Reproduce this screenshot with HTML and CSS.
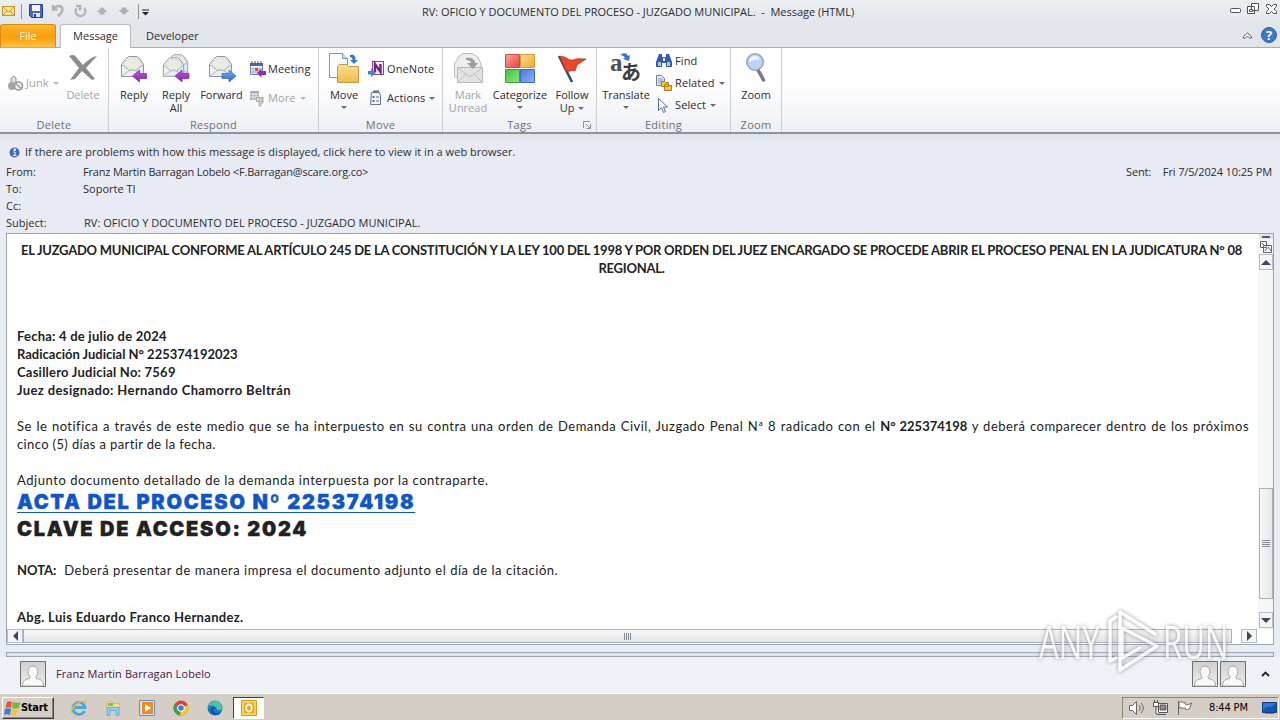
FILE: index.html
```
<!DOCTYPE html>
<html lang="en">
<head>
<meta charset="utf-8">
<title>RV: OFICIO Y DOCUMENTO DEL PROCESO - JUZGADO MUNICIPAL. - Message (HTML)</title>
<link rel="stylesheet" href="styles.css">
</head>
<body>
<svg width="0" height="0" class="defs" aria-hidden="true">
  <defs>
    <linearGradient id="paper" x1="0" y1="0" x2="1" y2="1"><stop offset="0" stop-color="#fffef8"/><stop offset="1" stop-color="#dde5ef"/></linearGradient>
    <linearGradient id="violet" x1="0" y1="0" x2="0" y2="1"><stop offset="0" stop-color="#c65be6"/><stop offset="1" stop-color="#7d1fae"/></linearGradient>
    <linearGradient id="blue" x1="0" y1="0" x2="0" y2="1"><stop offset="0" stop-color="#7fb4f4"/><stop offset="1" stop-color="#2564c4"/></linearGradient>
    <linearGradient id="folder" x1="0" y1="0" x2="0" y2="1"><stop offset="0" stop-color="#fbe19a"/><stop offset="1" stop-color="#eebb48"/></linearGradient>
    <linearGradient id="photo" x1="0" y1="0" x2="0" y2="1"><stop offset="0" stop-color="#cfcfcf"/><stop offset="1" stop-color="#eee"/></linearGradient>
    <linearGradient id="gr" x1="0" y1="0" x2="1" y2="1"><stop offset="0" stop-color="#ffa59c"/><stop offset="1" stop-color="#e8443e"/></linearGradient>
    <linearGradient id="go" x1="0" y1="0" x2="1" y2="1"><stop offset="0" stop-color="#fbdc8c"/><stop offset="1" stop-color="#f0a93a"/></linearGradient>
    <linearGradient id="gg" x1="0" y1="0" x2="1" y2="1"><stop offset="0" stop-color="#3fc43a"/><stop offset="1" stop-color="#8fe486"/></linearGradient>
    <linearGradient id="gb" x1="0" y1="0" x2="1" y2="1"><stop offset="0" stop-color="#4777e4"/><stop offset="1" stop-color="#8fb4fa"/></linearGradient>
    <symbol id="envelope" viewBox="0 0 26 24">
      <path d="M1.500 9.500 6 3.500 9 1.500h8L20 4l3.500 5.500v12h-22z" fill="url(#paper)" stroke="#8b95a3"/>
      <path d="M3 9.500 7 5l3-2h6l3 2 3.500 4.500-6 6h-7z" fill="#ecebe2" stroke="#c9c9c4" stroke-width=".6"/>
      <path d="M2 10l8 6M23 10l-8 6M2 21l8-6h5l8 6" fill="none" stroke="#a2adbc" stroke-width=".9"/>
    </symbol>
    <symbol id="person" viewBox="0 0 26 26">
      <path d="M.5.500h25v25H.5z" fill="url(#photo)" stroke="#6e6e6e"/>
      <path d="M2.500 25c0-6 3-6.500 7-7.500l.5-2c-3-3-3-10 3-10.500 6 .5 6 7.500 3 10.500l.5 2c4 1 7 1.500 7 7.500z" fill="#f8f8f8" stroke="#a4a4a4"/>
    </symbol>
  </defs>
</svg>
<div class="window">
  <header class="titlebar">
    <div class="quick">
      <svg width="16" height="22" viewBox="0 0 16 22"><rect x="2.500" y="6.500" width="12" height="9" fill="#fbe38e" stroke="#c9962c"/><path d="M3 7l5.500 5L14 7M3 15l4-4M14 15l-4-4" fill="none" stroke="#c9962c"/></svg>
      <i class="bar"></i>
      <svg class="save" width="16" height="22" viewBox="0 0 16 22"><path d="M1.500 4.500h13v13h-11l-2-2z" fill="#4a66c8" stroke="#2b4093"/><path d="M4 5h8v6H4z" fill="#f4f7ff"/><path d="M5 13h7v4H5z" fill="#dfe5f2"/><path d="M6 14h2v3H6z" fill="#2b4093"/></svg>
      <svg class="undo" width="14" height="22" viewBox="0 0 14 22"><path d="M2 5v4.500h4.500M2.500 9C5 5 11 5 11.500 9c.3 3-2 4.500-4.500 7.500" fill="none" stroke="#b0b4b8" stroke-width="2.400"/></svg>
      <svg class="redo" width="14" height="22" viewBox="0 0 14 22"><path d="M2.500 8.500A4.800 4.800 0 1 0 10 8M2 6h4v4.500" fill="none" stroke="#b0b4b8" stroke-width="2.400"/></svg>
      <svg class="up" width="12" height="22" viewBox="0 0 12 22"><path d="M6 7l5.500 5h-3v2.500h-5V12h-3z" fill="#aeb2b6"/></svg>
      <svg class="down" width="12" height="22" viewBox="0 0 12 22"><path d="M6 15L.5 10h3V7.500h5V10h3z" fill="#aeb2b6"/></svg>
      <i class="bar last"></i>
      <svg width="9" height="22" viewBox="0 0 9 22"><path d="M1 9.500h7v1H1zM1 12h7l-3.500 3.500z" fill="#222"/></svg>
    </div>
    <h1 class="caption">RV: OFICIO Y DOCUMENTO DEL PROCESO - JUZGADO MUNICIPAL. &nbsp;- &nbsp;Message (HTML)</h1>
    <svg class="controls" width="51" height="22" viewBox="0 0 51 22" fill="#fff" stroke="#4c5259"><rect x="1.500" y="8.500" width="10" height="4" rx="1"/><path d="M22.500 3.500h7v7h-7zM18.500 6.500h7v7h-7z"/><path d="M20.500 9.500h3v2h-3z"/><path d="M37.500 4.500h3l2 2 2-2h3v2l-2.500 2.500 2.500 2.500v2h-3l-2-2-2 2h-3v-2L40 9l-2.500-2.500z"/></svg>
  </header>
  <nav class="tabs">
    <span class="tab file">File</span>
    <span class="tab active">Message</span>
    <span class="tab plain">Developer</span>
    <svg class="help" width="40" height="24" viewBox="0 0 40 24"><path d="M3.500 14v-1.500l4-3.500 4 3.500V14h-2l-2-2-2 2z" fill="#fff" stroke="#555b62"/><circle cx="29" cy="11" r="7.500" fill="#3f78c8" stroke="#2c5da8"/><text x="29" y="16" text-anchor="middle" class="q">?</text></svg>
  </nav>
  <section class="ribbon">
    <div class="group g-delete">
      <div class="tools">
        <div class="stack mid off">
          <span class="small"><svg width="18" height="18" viewBox="0 0 18 18"><path d="M4 9V4l3-2 2 2v5" fill="#ddd" stroke="#9a9a9a"/><circle cx="5" cy="12" r="4" fill="#a5a5a5"/><circle cx="11.500" cy="12" r="4" fill="#eee" stroke="#999" stroke-width="1.600"/><path d="M9 9.500l5 5" stroke="#999" stroke-width="1.500"/></svg><b>Junk</b><i class="arrow"></i></span>
        </div>
        <div class="big off w42"><svg width="32" height="32" viewBox="0 0 32 32"><path d="M2 4c4-2 6-1 8 2l6 7C20 9 24 5 30 4l-11 12 9 11-3 1-10-9-7 8-5 1 9-12z" fill="#8d8d8d"/></svg><b>Delete</b></div>
      </div>
      <h2>Delete</h2>
    </div>
    <div class="group g-respond">
      <div class="tools">
        <div class="big w42"><svg width="32" height="32" viewBox="0 0 32 32"><use href="#envelope" x="2" y="3" width="26" height="24"/><path d="M14.500 24l7-6v3.500h7v5h-7V30z" fill="url(#violet)" stroke="#7a2aa4" stroke-width=".7"/></svg><b>Reply</b></div>
        <div class="big w42"><svg width="32" height="32" viewBox="0 0 32 32"><use href="#envelope" x="6" y="1" width="24" height="23"/><use href="#envelope" x="2" y="4" width="24" height="23"/><path d="M15 24l7-6v3.500h7v5h-7V30z" fill="url(#violet)" stroke="#7a2aa4" stroke-width=".7"/></svg><b>Reply</b><b>All</b></div>
        <div class="big w48"><svg width="32" height="32" viewBox="0 0 32 32"><use href="#envelope" x="2" y="3" width="26" height="24"/><path d="M30 24l-7-6v3.500h-7v5h7V30z" fill="url(#blue)" stroke="#2f65b6" stroke-width=".7"/></svg><b>Forward</b></div>
        <div class="stack two">
          <span class="small"><svg width="18" height="18" viewBox="0 0 18 18"><path d="M1.500 3.500h12v11h-12z" fill="#fff" stroke="#6a83b4"/><path d="M1 3h13v3H1z" fill="#4668ab"/><path d="M4 7v7M7 7v7M10 7v7M2 9h11M2 12h11" stroke="#93a5c8"/><path d="M3 1v3M6 1v3M9 1v3M12 1v3" stroke="#385896"/><path d="M6 8h3v3H6z" fill="#e0503a"/><path d="M8 13l4.500-4.500V11H17v4h-4.500v2.500z" fill="#922bba"/></svg><b>Meeting</b></span>
          <span class="small off"><svg width="18" height="18" viewBox="0 0 18 18"><path d="M1 2h9v9H1z" fill="#aaa"/><path d="M1 5h9M1 8h9M4 4v7M7 4v7" stroke="#eee"/><path d="M7.500 8.500h6v4h-6zM10 11l4-3v6h-2v3h-2z" fill="#ddd" stroke="#aaa"/></svg><b>More</b><i class="arrow"></i></span>
        </div>
      </div>
      <h2>Respond</h2>
    </div>
    <div class="group g-move">
      <div class="tools">
        <div class="big w42"><svg width="32" height="32" viewBox="0 0 32 32"><path d="M1.500 1.500h13l5 5v19h-18z" fill="#fbfcff" stroke="#8593ab"/><path d="M14.500 1.500v5h5" fill="#dde5f2" stroke="#8593ab"/><path d="M9.500 30.500v-16l2-2h7l2 2h10v16z" fill="url(#folder)" stroke="#c99a3c"/><path d="M22 3c4-1 6 1 5.500 5H30l-4 4-4-4h2.500c0-2-1-3-2.500-3z" fill="#3277d8"/></svg><b>Move</b><i class="arrow"></i></div>
        <div class="stack two">
          <span class="small"><svg width="18" height="18" viewBox="0 0 18 18"><rect x="4.500" y="1.500" width="11" height="13" fill="#f6eefa" stroke="#8b479c"/><path d="M7 12V4l5.500 8V4" fill="none" stroke="#78247f" stroke-width="2.400"/><path d="M0 11h3V8.500l5 4.200-5 4.300v-2.500H0z" fill="#3f83da"/></svg><b>OneNote</b></span>
          <span class="small"><svg width="18" height="18" viewBox="0 0 18 18"><path d="M3.500 3.500h8l1 3v9h-10z" fill="#f2f5fb" stroke="#66758e"/><path d="M5 2.500h6" stroke="#66758e" stroke-width="2"/><path d="M4.500 7h2v2h-2zM4.500 11h2v2h-2z" fill="#5e7195"/><path d="M8 8h3M8 12h3" stroke="#5e7195"/></svg><b>Actions</b><i class="arrow"></i></span>
        </div>
      </div>
      <h2>Move</h2>
    </div>
    <div class="group g-tags">
      <div class="tools">
        <div class="big off w42"><svg width="32" height="32" viewBox="0 0 32 32"><path d="M2.500 12L7 4l4-2.500h9L26 5l3 7v13H2.500z" fill="#eee" stroke="#bbb"/><path d="M5.500 15.500h25v15h-25z" fill="#e3e3e3" stroke="#b8b8b8"/><path d="M6 16l12 9 12-9M6 30l8-8M30 30l-8-8" fill="none" stroke="#c0c0c0"/><path d="M14 6c5-1 9 1 9 5h3l-5 6-6-6h4c0-2-2-3-5-3z" fill="#9c9c9c"/></svg><b>Mark</b><b>Unread</b></div>
        <div class="big w60"><svg width="32" height="32" viewBox="0 0 32 32"><path d="M1.500 2.500h14v13h-14z" fill="url(#gr)" stroke="#d34a42"/><path d="M16.500 2.500h14v13h-14z" fill="url(#go)" stroke="#d69a36"/><path d="M1.500 17.500h14v13h-14z" fill="url(#gg)" stroke="#35a730"/><path d="M16.500 17.500h14v13h-14z" fill="url(#gb)" stroke="#3c68cc"/></svg><b>Categorize</b><i class="arrow"></i></div>
        <div class="big w42"><svg width="32" height="32" viewBox="0 0 32 32"><path d="M3 4l13 26" stroke="#3b4c6c" stroke-width="2.600"/><path d="M4 5c5-2 8 4 13 3 4-2 8-1 13-1L21 13l-2 6c-4-1-6 1-9 0z" fill="#e8482b" stroke="#b52a16" stroke-width=".7"/></svg><b>Follow</b><b class="inl">Up<i class="arrow"></i></b></div>
      </div>
      <h2>Tags</h2>
      <svg class="launcher" width="9" height="9" viewBox="0 0 9 9"><path d="M.5 7V.500H7M3 3l4 4M7.500 3.500v4h-4" fill="none" stroke="#8c9298"/></svg>
    </div>
    <div class="group g-edit">
      <div class="tools">
        <div class="big w50"><svg class="glyphs" width="32" height="32" viewBox="0 0 32 32"><text x="0" y="19" class="la">a</text><text x="11" y="28" class="jp">あ</text><path d="M10 3c4-3 7-2 8 1l2-1-1 6-6-2 2-1c-1-2-3-3-5-3z" fill="#3277d8"/></svg><b>Translate</b><i class="arrow"></i></div>
        <div class="stack three">
          <span class="small"><svg width="18" height="18" viewBox="0 0 18 18"><path d="M4 2h3v3h4V2h3l3 8v5h-6v-4H7v4H1v-5z" fill="#325da8"/><path d="M3 10h3v4H3zM12 10h3v4h-3z" fill="#a8c6ee"/><path d="M8 6h2v3H8z" fill="#dce8f8"/></svg><b>Find</b></span>
          <span class="small"><svg width="18" height="18" viewBox="0 0 18 18"><path d="M1.500 1.500h5l3 3v7h-8z" fill="#e7eefa" stroke="#6a7fa8"/><path d="M3 5h5M3 7h5M3 9h5" stroke="#7e93ba"/><path d="M6.500 12.500v-5h3l1 1h3v4zM9.500 16.500v-6h3l1 1h3v5z" fill="#f9c43f" stroke="#b07a14"/></svg><b>Related</b><i class="arrow"></i></span>
          <span class="small"><svg width="18" height="18" viewBox="0 0 18 18"><path d="M3.500 2.500v12l3-3 2 5 2-1-2-4.500h4z" fill="#fff" stroke="#586b96"/></svg><b>Select</b><i class="arrow"></i></span>
        </div>
      </div>
      <h2>Editing</h2>
    </div>
    <div class="group g-zoom">
      <div class="tools">
        <div class="big w42"><svg width="32" height="32" viewBox="0 0 32 32"><path d="M18 18l5.500 10" stroke="#777c84" stroke-width="3.600" stroke-linecap="round"/><circle cx="15" cy="10" r="8.200" fill="#b9d6f5" stroke="#9ba5b4" stroke-width="1.600"/><path d="M9 10c0-4 3-6 6-6 4 0 5 3 4 4-3-1-6 0-10 2z" fill="#eef6fe"/></svg><b>Zoom</b></div>
      </div>
      <h2>Zoom</h2>
    </div>
  </section>
  <section class="headers">
    <p class="notice"><svg width="11" height="11" viewBox="0 0 11 11"><circle cx="5.500" cy="5.500" r="5" fill="#4068bd"/><path d="M5 2h1.500v1.500H5zM4.500 5H6v3M4 8.500h3.500" stroke="#fff" fill="none"/></svg><span>If there are problems with how this message is displayed, click here to view it in a web browser.</span></p>
    <dl>
      <dt>From:</dt><dd class="from">Franz Martin Barragan Lobelo &lt;F.Barragan@scare.org.co&gt;</dd><dd class="sent">Sent: <span>Fri 7/5/2024 10:25 PM</span></dd>
      <dt>To:</dt><dd>Soporte TI</dd><dd></dd>
      <dt>Cc:</dt><dd></dd><dd></dd>
      <dt>Subject:</dt><dd class="subject">RV: OFICIO Y DOCUMENTO DEL PROCESO - JUZGADO MUNICIPAL.</dd><dd></dd>
    </dl>
  </section>
  <main class="viewer">
    <div class="row">
      <article class="mail">
        <p class="lead">EL JUZGADO MUNICIPAL CONFORME AL ARTÍCULO 245 DE LA CONSTITUCIÓN Y LA LEY 100 DEL 1998 Y POR ORDEN DEL JUEZ ENCARGADO SE PROCEDE ABRIR EL PROCESO PENAL EN LA JUDICATURA N° 08<br>REGIONAL.</p>
        <p class="facts"><span class="wide">Fecha: 4 de julio de 2024</span><br>Radicación Judicial N° 225374192023<br><span class="wide">Casillero Judicial No: 7569</span><br><span class="wider">Juez designado: Hernando Chamorro Beltrán</span></p>
        <p class="notify"><span class="full">Se le notifica a través de este medio que se ha interpuesto en su contra una orden de Demanda Civil, Juzgado Penal Nª 8 radicado con el <strong>N° 225374198</strong> y deberá comparecer dentro de los próximos</span><span class="rest">cinco (5) días a partir de la fecha.</span></p>
        <p class="attach">Adjunto documento detallado de la demanda interpuesta por la contraparte.</p>
        <p class="shout"><a>ACTA DEL PROCESO Nº 225374198</a></p>
        <p class="shout">CLAVE DE ACCESO: 2024</p>
        <p class="note"><strong>NOTA:</strong>&nbsp; Deberá presentar de manera impresa el documento adjunto el día de la citación.</p>
        <p class="sign">Abg. Luis Eduardo Franco Hernandez.</p>
      </article>
      <div class="vscroll">
        <i class="split"></i>
        <svg width="14" height="14" viewBox="0 0 14 14" fill="#f5f5f8" stroke="#626873"><path d="M1.500 1.500h6v6h-6zM4.500 5.500h8v7h-8z"/><path d="M3 3l3 3M9 7l3 4M6 11l2-3"/></svg>
        <span class="btn"><i class="tri t-up"></i></span>
        <span class="thumb"><i class="grip"></i></span>
        <span class="btn"><i class="tri t-down"></i></span>
      </div>
    </div>
    <div class="hscroll"><span class="btn"><i class="tri t-left"></i></span><span class="thumb"><i class="grip"></i></span><span class="btn right"><i class="tri t-right"></i></span></div>
  </main>
  <div class="splitter"></div>
  <footer class="people">
    <svg width="26" height="26"><use href="#person"/></svg>
    <span class="who">Franz Martin Barragan Lobelo</span>
    <svg width="26" height="26"><use href="#person"/></svg>
    <svg width="26" height="26"><use href="#person"/></svg>
    <svg class="chev" width="9" height="6" viewBox="0 0 9 6"><path d="M1 5l3.500-3.500L8 5" fill="none" stroke="#222" stroke-width="1.800"/></svg>
  </footer>
  <div class="taskbar">
    <span class="start"><svg width="17" height="16" viewBox="0 0 17 16"><path d="M3 2c2-1 4-1 5 0L7 8C5 7 4 7 1.500 8z" fill="#e8542b"/><path d="M9 2c2 1 5 1 7.500 0l-2 6c-2 1-4 1-6.500 0z" fill="#78b83a"/><path d="M1 9c2-1 4-1 6 0l-1 6c-2-1-4-1-6 0z" fill="#3c7fd4"/><path d="M8 9c2 1 4 1 6 0l-2 6c-2 1-3 1-5 0z" fill="#f4c430"/></svg>Start</span>
    <div class="apps">
      <svg width="18" height="18" viewBox="0 0 18 18"><path d="M14.500 12A6 6 0 1 1 15 8.500H5" fill="none" stroke="#45a8e0" stroke-width="2.800"/><path d="M2 15C-1 11 8 1 16 2c1 1 0 2-1 3" fill="none" stroke="#f0bc35" stroke-width="1.500"/></svg>
      <svg width="18" height="18" viewBox="0 0 18 18"><path d="M2.500 2.500h5l1 2h7v6h-13z" fill="#f5dc8c" stroke="#d9bb6a"/><path d="M4 4h5v3H4z" fill="#6fc36a"/><path d="M3 8.500h12v8h-3v-5H6v5H3z" fill="#8ccbed" stroke="#6fb0d6"/></svg>
      <svg width="18" height="18" viewBox="0 0 18 18"><path d="M1.500 1.500h15v15h-15z" fill="#cfe3f5" stroke="#5a94cc"/><path d="M4 3h11v12H4z" fill="#f38b1c"/><path d="M7 5l6 4-6 4z" fill="#fff"/></svg>
      <svg width="18" height="18" viewBox="0 0 18 18"><circle cx="9" cy="9" r="7.500" fill="#e24033"/><path d="M9 9L2.500 5.200A7.500 7.500 0 0 0 8 16.400z" fill="#35a351"/><path d="M9 9l7-3a7.500 7.500 0 0 1-8 10.400z" fill="#f8c62d"/><circle cx="9" cy="9" r="3.800" fill="#fff"/><circle cx="9" cy="9" r="2.800" fill="#3b7ae0"/></svg>
      <svg width="18" height="18" viewBox="0 0 18 18"><circle cx="9" cy="9" r="7.500" fill="#1976c8"/><path d="M2 8c1-8 14-8 14.500 0 0 4-5 4-6 2 0-3-5-5-8.500-2z" fill="#45c7a4"/><path d="M10 10c-4-2-5 4 2 4.500l3-1c-3 4-9 3-10-1-1-5 4-5 5-2.500z" fill="#0c4f9d"/></svg>
    </div>
    <span class="current"><svg width="18" height="18" viewBox="0 0 18 18"><path d="M1.500 1.500h15v15h-15z" fill="#f7d25f" stroke="#d39a20"/><path d="M4 4h10v10H4z" fill="#e9a51c"/><ellipse cx="9" cy="9" rx="2.800" ry="3.500" fill="none" stroke="#fff8d8" stroke-width="1.800"/></svg></span>
    <div class="tray">
      <svg width="18" height="18" viewBox="0 0 18 18" fill="#fff" stroke="#666"><path d="M1.500 6.500h3l4-4v13l-4-4h-3z"/><path d="M11 6c1.500 2 1.500 4 0 6M13 4c3 3 3 7 0 10" fill="none"/></svg>
      <svg width="18" height="18" viewBox="0 0 18 18" fill="#fff" stroke="#555"><path d="M6.500 4.500h9v9h-9z"/><path d="M8 6h6v5H8z" fill="#888"/><path d="M6 15.500h8M1.500 3.500h5v4h-5zM2.500 1v3M5.500 1v3M4 8v7h3"/></svg>
      <svg width="18" height="18" viewBox="0 0 18 18" fill="#fff" stroke="#666"><path d="M2.500 2v14M3 3.500c3-2 4 1 6 0v1.500c2 2 4 0 7-1-2 2-1 4-3 6-2 1-4 1-4-1-2 1-3-1-6 0z"/></svg>
      <time>8:44 PM</time>
      <svg width="16" height="18" viewBox="0 0 16 18"><path d="M.5 3.500h14v10H.5z" fill="#2f7bdc" stroke="#123e80"/><path d="M1 11c4-5 8-1 13-7v9H1z" fill="#1754ae"/><path d="M3 14h9v1H3z" fill="#69809f"/></svg>
    </div>
  </div>
  <div class="watermark"><span class="wm">ANY</span><svg width="58" height="66" viewBox="0 0 58 66"><path d="M50 26L15 4v58l37-24L17 20v30l18-10M11 9l-6 4v40l6-3" fill="none" stroke="#fff" stroke-width="3.500" stroke-linejoin="round" stroke-linecap="round"/></svg><span class="wm">RUN</span></div>
</div>
</body>
</html>
```
FILE: styles.css
```
* { box-sizing: border-box; }
body { margin: 0; font: 11px/14px "Open Sans", "Noto Sans", sans-serif; color: #2b2d31; }
b { font-weight: 400; }
p, h1, h2, dl, dd { margin: 0; font-weight: 400; }
svg { flex: none; display: block; }
.defs { position: absolute; }
.window { position: relative; width: 1280px; height: 720px; overflow: hidden; display: flex; flex-direction: column; background: #e8ecf3; white-space: nowrap; }

.titlebar { flex: none; height: 24px; display: flex; background: linear-gradient(#eceff2, #e3e6ea); }
.quick { display: flex; width: 422px; }
.bar { width: 1px; height: 15px; margin: 4px 6px 0 5px; background: #8f9398; }
.save { margin-right: 7px; }
.undo { margin-right: 9px; }
.redo { margin-right: 8px; }
.up { margin-right: 10px; }
.bar.last { margin: 4px 2px 0 8px; }
.caption { font-size: 11px; line-height: 24px; letter-spacing: -.02px; }
.controls { margin-left: auto; }

.tabs { flex: none; height: 24px; display: flex; background: #e2e6ea; border-bottom: 1px solid #a9adb3; }
.tab { line-height: 24px; text-align: center; }
.file { width: 56px; height: 23px; color: #fff6d8; border: 1px solid #d98c10; border-bottom: 0; border-radius: 3px 3px 0 0; background: linear-gradient(#ffb52e, #f99d0c 55%, #ffc340); line-height: 22px; }
.active { width: 71px; height: 24px; margin-left: 4px; background: #fff; border: 1px solid #b9bdc3; border-bottom: 0; border-radius: 3px 3px 0 0; line-height: 22px; }
.plain { margin-left: 15px; }
.help { margin-left: auto; }
.q { font: bold 13px "Open Sans", sans-serif; fill: #fff; }

.ribbon { flex: none; height: 86px; display: flex; background: linear-gradient(#fff, #fdfdfe 50%, #eceff4); border-bottom: 2px solid #8d929b; }
.group { position: relative; height: 84px; border-right: 1px solid #c9ced6; }
.g-delete { width: 109px; }
.g-respond { width: 210px; }
.g-move { width: 124px; }
.g-tags { width: 154px; }
.g-edit { width: 134px; }
.g-zoom { width: 51px; }
.tools { display: flex; height: 70px; padding: 4px 0 0 4px; }
.group h2 { font-size: 11px; text-align: center; line-height: 14px; color: #6a717b; letter-spacing: .3px; }
.big { display: flex; flex-direction: column; align-items: center; }
.big b { line-height: 13px; height: 13px; }
.big b:first-of-type { margin-top: 4px; }
.big .arrow { margin: 5px 0 0; }
.w42 { width: 42px; }
.w48 { width: 49px; }
.w50 { width: 50px; }
.w60 { width: 62px; }
.inl { display: flex; }
.big .inl .arrow { margin: 6px 0 0 4px; }
.off { color: #a3a5a8; }
.arrow { width: 0; height: 0; border: 3px solid transparent; border-top-color: #6b6f75; border-bottom: 0; }
.off .arrow { border-top-color: #b5b7ba; }
.stack { display: flex; flex-direction: column; }
.stack.mid { width: 58px; padding: 22px 0 0 3px; }
.two { padding: 8px 0 0 3px; gap: 11px; }
.three { padding: 0 0 0 4px; gap: 4px; }
.small { display: flex; align-items: center; height: 18px; }
.small b { margin-left: 1px; letter-spacing: .12px; }
.three b { margin-left: 2px; }
.small .arrow { margin-left: 4px; }
.launcher { position: absolute; right: 4px; bottom: 2px; }
.glyphs { overflow: visible; }
.la { font: bold 25px "Liberation Serif", serif; fill: #4d4f53; }
.jp { font: bold 20px "Noto Sans CJK JP", sans-serif; fill: #3b3d41; }

.headers { flex: none; height: 99px; padding: 11px 8px 0 6px; background: linear-gradient(#dfe3ea, #e8ebf3 8px); }
.notice { display: flex; align-items: center; height: 14px; padding-left: 3px; gap: 5px; letter-spacing: .04px; }
dl { display: grid; grid-template-columns: 77px 1fr auto; grid-auto-rows: 17px; line-height: 17px; padding-top: 4px; }
.from { letter-spacing: -.19px; }
.subject { letter-spacing: .03px; padding-left: 1px; }
.sent { letter-spacing: -.13px; }
.sent span { margin-left: 9px; }

.viewer { flex: none; width: 1268px; height: 412px; margin: 0 6px; border: 1px solid #9ca4b2; background: #fff; }
.row { display: flex; height: 396px; }
.mail { width: 1251px; padding: 7px 10px 0; font: 13px/18px Lato, "Open Sans", sans-serif; color: #222; }
.lead { font-weight: 700; text-align: center; letter-spacing: -.24px; margin: 0 -4px 0 -6px; }
.facts { font-weight: 700; margin-top: 50px; }
.wide { letter-spacing: .23px; }
.wider { letter-spacing: .38px; }
.notify { margin-top: 18px; }
.notify span { display: block; }
.full { text-align: justify; text-align-last: justify; letter-spacing: .48px; white-space: normal; margin-right: -1px; }
.full strong { letter-spacing: 0; }
.rest { letter-spacing: .37px; }
.attach { margin-top: 18px; letter-spacing: .55px; }
.shout { font: 900 20px/27px Inter, "Liberation Sans", sans-serif; letter-spacing: 1.75px; -webkit-text-stroke: .4px; }
.shout a { color: #1155cc; text-decoration: underline; text-underline-offset: 3px; text-decoration-thickness: 1px; }
.note { margin-top: 18px; letter-spacing: .53px; }
.note strong { letter-spacing: 0; }
.sign { font-weight: 700; margin-top: 29px; letter-spacing: .32px; }

.vscroll { width: 15px; display: flex; flex-direction: column; align-items: center; background: #f6f7f9; }
.split { width: 14px; height: 5px; border: solid #dfe3ea; border-width: 2px 3px 1px; background: #555b66; margin-bottom: 1px; }
.btn { display: flex; align-items: center; justify-content: center; width: 14px; height: 16px; border: 1px solid #b5bac3; background: #f4f5f8; flex: none; }
.vscroll .thumb { width: 14px; height: 111px; margin: 218px 0 13px; border: 1px solid #abb0b7; background: linear-gradient(90deg, #f7f8f8, #e4e7e9); display: flex; align-items: center; justify-content: center; flex: none; }
.grip { width: 8px; height: 7px; background: repeating-linear-gradient(#858b94 0 1px, transparent 1px 2px); }
.tri { width: 0; height: 0; border: 5px solid transparent; }
.t-up { border-top: 0; border-bottom-color: #40465a; }
.t-down { border-bottom: 0; border-top-color: #40465a; }
.t-left { border-left: 0; border-right-color: #40465a; }
.t-right { border-right: 0; border-left-color: #40465a; }
.hscroll { display: flex; height: 14px; width: 1250px; margin-top: -1px; }
.hscroll .btn { width: 16px; height: 14px; }
.hscroll .thumb { width: 1209px; border: 1px solid #abb0b7; background: linear-gradient(#f7f8f8, #e2e5e9); display: flex; align-items: center; justify-content: center; }
.hscroll .right { margin-left: auto; }
.hscroll .grip { width: 7px; height: 7px; background: repeating-linear-gradient(90deg, #858b94 0 1px, transparent 1px 2px); }

.splitter { flex: none; height: 5px; margin: 7px 6px 0; border: 1px solid #9fa6b3; background: #dfe4ec; }
.people { flex: none; height: 36px; display: flex; align-items: center; padding: 0 10px 2px 20px; background: #eff2f6; }
.who { margin: 0 auto 0 10px; color: #4a1540; letter-spacing: .08px; }
.people svg + svg { margin-left: 2px; }
.people .chev { margin-left: 15px !important; }

.taskbar { flex: none; height: 27px; display: flex; align-items: center; padding: 1px 1px 0 2px; background: #d5cec6; border-top: 1px solid #fff; font: 11px "DejaVu Sans Condensed", "DejaVu Sans", sans-serif; color: #000; }
.start { display: flex; align-items: center; width: 52px; height: 22px; padding-left: 1px; font-weight: 700; letter-spacing: -.3px; border: 1px solid; border-color: #fff #404040 #404040 #fff; box-shadow: inset -1px -1px #8a8680; }
.apps { display: flex; gap: 16px; margin-left: 16px; }
.current { width: 31px; height: 22px; margin-left: 9px; display: flex; align-items: center; justify-content: center; background: #fff; border: 1px solid; border-color: #404040 #fff #fff #404040; }
.tray { display: flex; align-items: center; gap: 6px; width: 157px; height: 22px; margin-left: auto; padding-left: 5px; border: 1px solid; border-color: #8a8680 #fff #fff #8a8680; }
.tray time { width: 42px; margin: 0 6px 0 9px; letter-spacing: -.15px; }

.watermark { position: absolute; left: 1039px; top: 608px; display: flex; align-items: center; opacity: .75; filter: drop-shadow(0 0 2px #6f7278); }
.wm { display: block; width: 66px; height: 50px; font: 400 46px/50px "Open Sans", Lato, sans-serif; color: #fff; transform: scaleX(.68); transform-origin: 0 50%; }
```
